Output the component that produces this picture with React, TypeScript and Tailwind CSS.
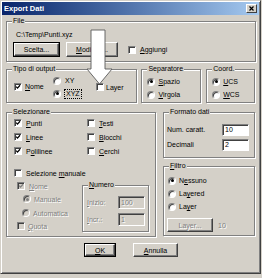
import React from "react";

const dis = "text-[#808080] [text-shadow:1px_1px_0_#fff]";

function Check({ checked = false, disabled = false, className = "" }: { checked?: boolean; disabled?: boolean; className?: string }) {
  return (
    <span
      className={`relative inline-block w-[8px] h-[8px] shrink-0 border border-t-[#808080] border-l-[#808080] border-r-white border-b-white shadow-[inset_1px_1px_0_#404040] ${disabled ? "bg-[#d4d0c8]" : "bg-white"} ${className}`}
    >
      {checked && (
        <svg viewBox="0 0 6 6" className="absolute inset-0 w-[6px] h-[6px]">
          <path d="M1.2 2.6 L2.5 4.1 L5 1.3" stroke={disabled ? "#808080" : "#000"} strokeWidth="1.3" fill="none" />
        </svg>
      )}
    </span>
  );
}

function Radio({ checked = false, disabled = false, className = "" }: { checked?: boolean; disabled?: boolean; className?: string }) {
  return (
    <span
      className={`inline-flex items-center justify-center w-[8px] h-[8px] shrink-0 rounded-full border border-t-[#808080] border-l-[#808080] border-r-white border-b-white shadow-[inset_1px_1px_0_#404040] ${disabled ? "bg-[#d4d0c8]" : "bg-white"} ${className}`}
    >
      {checked && <span className={`w-[3px] h-[3px] rounded-full ${disabled ? "bg-[#808080]" : "bg-black"}`} />}
    </span>
  );
}

function Group({ label, className = "", children }: { label: React.ReactNode; className?: string; children?: React.ReactNode }) {
  return (
    <div className={`relative border border-[#808080] shadow-[1px_1px_0_#fff,inset_1px_1px_0_#fff] ${className}`}>
      <span className="absolute left-[5px] top-[-6px] px-[1px] bg-[#d4d0c8] leading-[10px] whitespace-nowrap">{label}</span>
      {children}
    </div>
  );
}

function Btn({ children, className = "", def = false, disabled = false }: { children: React.ReactNode; className?: string; def?: boolean; disabled?: boolean }) {
  return (
    <div className={`flex bg-[#d4d0c8] ${def ? "border border-black" : ""} ${className}`}>
      <div
        className={`flex-1 flex items-center justify-center border border-t-white border-l-white border-r-[#404040] border-b-[#404040] shadow-[inset_-1px_-1px_0_#808080] whitespace-nowrap ${disabled ? dis : ""}`}
      >
        {children}
      </div>
    </div>
  );
}

function Input({ value, disabled = false, className = "" }: { value: string; disabled?: boolean; className?: string }) {
  return (
    <div
      className={`flex items-center pl-[2px] border border-t-[#808080] border-l-[#808080] border-r-white border-b-white shadow-[inset_1px_1px_0_#404040] ${disabled ? "bg-[#d4d0c8] " + dis : "bg-white"} ${className}`}
    >
      {value}
    </div>
  );
}

export default function App() {
  return (
    <div className="relative w-[262px] h-[278px] overflow-hidden bg-[#d4d0c8] text-black text-[7px] leading-[9px] font-['Liberation_Sans',Arial,sans-serif]">
      <div className="w-[261px] h-[274px] flex flex-col p-[1px] border border-t-[#d4d0c8] border-l-[#d4d0c8] border-r-[#404040] border-b-[#404040] shadow-[inset_1px_1px_0_#fff,inset_-1px_-1px_0_#808080]">
        {/* Title bar */}
        <div className="h-[13px] flex items-center justify-between pl-[2px] pr-[2px] bg-linear-to-r from-[#0a246a] to-[#a6caf0]">
          <span className="text-white font-bold text-[7.5px]">Export Dati</span>
          <div className="w-[11px] h-[9px] flex bg-[#d4d0c8] border border-t-white border-l-white border-r-[#404040] border-b-[#404040]">
            <svg viewBox="0 0 9 7" className="w-[9px] h-[7px]">
              <path d="M2.5 1.5 L6.5 5.5 M6.5 1.5 L2.5 5.5" stroke="#000" strokeWidth="1.2" />
            </svg>
          </div>
        </div>

        {/* Body */}
        <div className="flex flex-col px-[4px]">
          {/* File */}
          <Group label="File" className="mt-[6px] w-[250px] h-[41px]">
            <div className="pt-[8px] pl-[6px]">
              <div className="ml-[3px]">C:\Temp\Punti.xyz</div>
              <div className="mt-[3px] flex items-center">
                <Btn def className="w-[47px] h-[15px]">Scelta...</Btn>
                <Btn className="ml-[6px] w-[52px] h-[15px]">
                  <span>
                    <u>M</u>odifica...
                  </span>
                </Btn>
                <Check className="ml-[10px]" />
                <span className="ml-[4px]">
                  <u>A</u>ggiungi
                </span>
              </div>
            </div>
          </Group>

          {/* Row 2 */}
          <div className="mt-[7px] flex">
            <Group label="Tipo di output" className="w-[132px] h-[34px]">
              <div className="flex h-full pl-[7px]">
                <div className="w-[39px] flex items-center pt-[1px]">
                  <Check checked />
                  <span className="ml-[3px]">
                    <u>N</u>ome
                  </span>
                </div>
                <div className="w-[43px] flex flex-col pt-[4px]">
                  <div className="h-[13px] flex items-center">
                    <Radio />
                    <span className="ml-[4px]">XY</span>
                  </div>
                  <div className="h-[13px] flex items-center">
                    <Radio checked />
                    <span className="ml-[3px] px-[1px] border border-dotted border-black leading-[8px]">XYZ</span>
                  </div>
                </div>
                <div className="flex items-center pt-[2px]">
                  <Check />
                  <span className="ml-[2px]">Layer</span>
                </div>
              </div>
            </Group>
            <Group label="Separatore" className="ml-[4px] w-[60px] h-[34px]">
              <div className="flex flex-col pl-[5px] pt-[5px]">
                <div className="h-[13px] flex items-center">
                  <Radio checked />
                  <span className="ml-[3px]">
                    <u>S</u>pazio
                  </span>
                </div>
                <div className="h-[13px] flex items-center">
                  <Radio />
                  <span className="ml-[3px]">
                    <u>V</u>irgola
                  </span>
                </div>
              </div>
            </Group>
            <Group label="Coord." className="ml-[5px] w-[49px] h-[34px]">
              <div className="flex flex-col pl-[5px] pt-[5px]">
                <div className="h-[13px] flex items-center">
                  <Radio checked />
                  <span className="ml-[3px]">
                    <u>U</u>CS
                  </span>
                </div>
                <div className="h-[13px] flex items-center">
                  <Radio />
                  <span className="ml-[3px]">
                    <u>W</u>CS
                  </span>
                </div>
              </div>
            </Group>
          </div>

          {/* Row 3 */}
          <div className="mt-[9px] flex">
            <Group label="Selezionare" className="w-[150px] h-[125px]">
              <div className="pt-[3px] pl-[7px] flex flex-col">
                <div className="grid grid-cols-[73px_1fr]">
                  {[
                    ["P", "unti", true],
                    ["T", "esti", false],
                    ["L", "inee", true],
                    ["B", "locchi", false],
                    ["P", "olilinee", true],
                    ["C", "erchi", false],
                  ].map(([a, b, c], i) => (
                    <div key={i} className="h-[14px] flex items-center">
                      <Check checked={c as boolean} />
                      <span className="ml-[4px]">
                        {i === 4 ? (
                          <>
                            P<u>o</u>lilinee
                          </>
                        ) : (
                          <>
                            <u>{a as string}</u>
                            {b as string}
                          </>
                        )}
                      </span>
                    </div>
                  ))}
                </div>
                <div className="mt-[8px] h-[14px] flex items-center">
                  <Check />
                  <span className="ml-[4px]">
                    Selezione <u>m</u>anuale
                  </span>
                </div>
                <div className="flex">
                  <div className="w-[68px] flex flex-col">
                    <div className="h-[12px] flex items-center pl-[3px]">
                      <Check checked disabled />
                      <span className={`ml-[4px] ${dis}`}>
                        <u>N</u>ome
                      </span>
                    </div>
                    <div className="h-[14px] flex items-center pl-[9px]">
                      <Radio checked disabled />
                      <span className={`ml-[3px] ${dis}`}>Manuale</span>
                    </div>
                    <div className="h-[14px] flex items-center pl-[8px]">
                      <Radio disabled />
                      <span className={`ml-[3px] ${dis}`}>Automatica</span>
                    </div>
                    <div className="h-[12px] flex items-center pl-[3px]">
                      <Check disabled />
                      <span className={`ml-[3px] ${dis}`}>
                        <u>Q</u>uota
                      </span>
                    </div>
                  </div>
                  <Group
                    label={
                      <>
                        <u>N</u>umero
                      </>
                    }
                    className="mt-[5px] w-[67px] h-[47px]"
                  >
                    <div className="pt-[10px] pl-[4px] flex flex-col">
                      <div className="h-[13px] flex items-center">
                        <span className={`w-[31px] ${dis}`}>
                          <u>I</u>nizio:
                        </span>
                        <Input value="100" disabled className="w-[27px] h-[13px]" />
                      </div>
                      <div className="mt-[4px] h-[13px] flex items-center">
                        <span className={`w-[31px] ${dis}`}>
                          <u>I</u>ncr.:
                        </span>
                        <Input value="1" disabled className="w-[27px] h-[13px]" />
                      </div>
                    </div>
                  </Group>
                </div>
              </div>
            </Group>

            <div className="ml-[7px] w-[92px] flex flex-col">
              <Group label="Formato dati" className="h-[46px]">
                <div className="pt-[9px] pl-[3px] flex flex-col">
                  <div className="h-[15px] flex items-center">
                    <span className="w-[55px]">Num. caratt.</span>
                    <Input value="10" className="w-[27px] h-[12px]" />
                  </div>
                  <div className="h-[15px] flex items-center">
                    <span className="w-[55px]">Decimali</span>
                    <Input value="2" className="w-[27px] h-[12px]" />
                  </div>
                </div>
              </Group>
              <Group
                label={
                  <>
                    <u>F</u>iltro
                  </>
                }
                className="mt-[8px] h-[70px]"
              >
                <div className="pt-[7px] flex flex-col">
                  <div className="pl-[4px] flex flex-col">
                    <div className="h-[13px] flex items-center">
                      <Radio checked />
                      <span className="ml-[3px]">
                        N<u>e</u>ssuno
                      </span>
                    </div>
                    <div className="h-[13px] flex items-center">
                      <Radio />
                      <span className="ml-[3px]">
                        La<u>y</u>ered
                      </span>
                    </div>
                    <div className="h-[13px] flex items-center">
                      <Radio />
                      <span className="ml-[3px]">
                        La<u>y</u>er
                      </span>
                    </div>
                  </div>
                  <div className="mt-[5px] pl-[3px] flex items-center">
                    <Btn disabled className="w-[46px] h-[14px]">
                      Layer...
                    </Btn>
                    <span className={`ml-[5px] ${dis}`}>10</span>
                  </div>
                </div>
              </Group>
            </div>
          </div>

          {/* Buttons */}
          <div className="mt-[6px] flex">
            <Btn def className="ml-[78px] w-[32px] h-[14px]">
              <span>
                <u>O</u>K
              </span>
            </Btn>
            <Btn className="ml-[17px] w-[45px] h-[14px]">
              <span>
                <u>A</u>nnulla
              </span>
            </Btn>
          </div>
        </div>
      </div>

      {/* Big white arrow overlay */}
      <svg className="absolute left-[86px] top-[29px]" width="28" height="57" viewBox="0 0 28 57">
        <polygon points="5,1 19,1 19,40 26,40 13.5,55 1,40 5,40" fill="#ffffff" stroke="#5a5a5a" strokeWidth="0.9" strokeLinejoin="miter" />
      </svg>
    </div>
  );
}
